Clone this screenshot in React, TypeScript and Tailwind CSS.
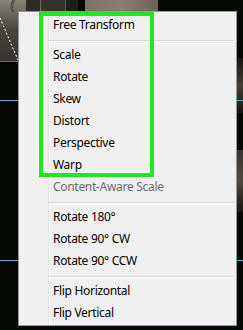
const items = [
  ['Scale', false],
  ['Rotate', false],
  ['Skew', false],
  ['Distort', false],
  ['Perspective', false],
  ['Warp', false],
  ['Content-Aware Scale', true],
] as const

function Row({ label, disabled }: { label: string; disabled?: boolean }) {
  return (
    <div
      className={`h-[22px] flex items-center pl-[34px] ${
        disabled ? 'text-[#6d6d6d]' : 'text-[#000000]'
      }`}
    >
      {label}
    </div>
  )
}

function Separator() {
  return (
    <div className="h-[8px] pl-[30px] pr-[2px] flex flex-col pt-[4px]">
      <div className="h-px bg-[#d7d7d7]" />
      <div className="h-px bg-[#ffffff]" />
    </div>
  )
}

export default function App() {
  return (
    <div
      className="relative w-[243px] h-[330px] overflow-hidden bg-[#050904]"
      style={{ fontFamily: '"Noto Sans", "Open Sans", sans-serif' }}
    >
      {/* canvas behind the menu */}
      <div className="flex items-start">
        <div className="relative w-[26px] h-[62px] bg-gradient-to-b from-[#8a8677] via-[#4a443d] to-[#37322d] border-b border-[#6b6a62]">
          <svg className="absolute left-0 top-0" width="26" height="62">
            <path d="M0 18 L18 60" stroke="#ffffff" strokeWidth="1" strokeDasharray="2 2" fill="none" />
            <path d="M14 0 Q10 6 13 12" stroke="#5a564b" strokeWidth="3" fill="none" />
          </svg>
        </div>
        <div className="w-[14px] h-[11px] bg-[#2e2b26]" />
        <div className="w-[25px] h-[11px] bg-[#35322c] border-l border-[#6a675c]" />
        <div className="w-[13px] h-[11px] bg-[#201e1a] border-l border-[#5a574d]" />
        <div className="w-[7px] h-[11px]" />
        <div className="w-[73px] h-[11px] bg-gradient-to-r from-[#7d7168] via-[#8a7e74] to-[#6d6058]" />
      </div>
      <div className="absolute right-0 top-[58px] w-[7px] h-[55px] bg-gradient-to-b from-[#1a1512] via-[#4a3d35] to-[#1a1512]" />
      <div className="absolute right-0 top-[150px] w-[7px] h-[62px] bg-gradient-to-b from-[#3e342e] via-[#55483f] to-[#1a1512]" />
      <div className="absolute inset-x-0 top-[100px] h-px bg-[#4fb3bd]" />
      <div className="absolute inset-x-0 top-[260px] h-px bg-[#4fb3bd]" />

      {/* context menu */}
      <div className="absolute left-[18px] top-[11px] w-[219px] h-[315px] bg-[#f0f0f0] border border-[#979797] text-[12px] tracking-[-0.3px] leading-none">
        <div className="absolute left-[29px] top-0 bottom-0 w-px bg-[#e2e3e3]" />
        <div className="absolute left-[30px] top-0 bottom-0 w-px bg-[#ffffff]" />
        <div className="relative pt-[2px]">
          <Row label="Free Transform" />
          <Separator />
          {items.map(([label, disabled]) => (
            <Row key={label} label={label} disabled={disabled} />
          ))}
          <Separator />
          <Row label="Rotate 180°" />
          <Row label="Rotate 90° CW" />
          <Row label="Rotate 90° CCW" />
          <Separator />
          <Row label="Flip Horizontal" />
          <Row label="Flip Vertical" />
        </div>
      </div>

      {/* highlight annotation */}
      <div className="absolute left-[39px] top-[12px] w-[115px] h-[165px] border-[4px] border-[#1ee81e]" />
    </div>
  )
}
